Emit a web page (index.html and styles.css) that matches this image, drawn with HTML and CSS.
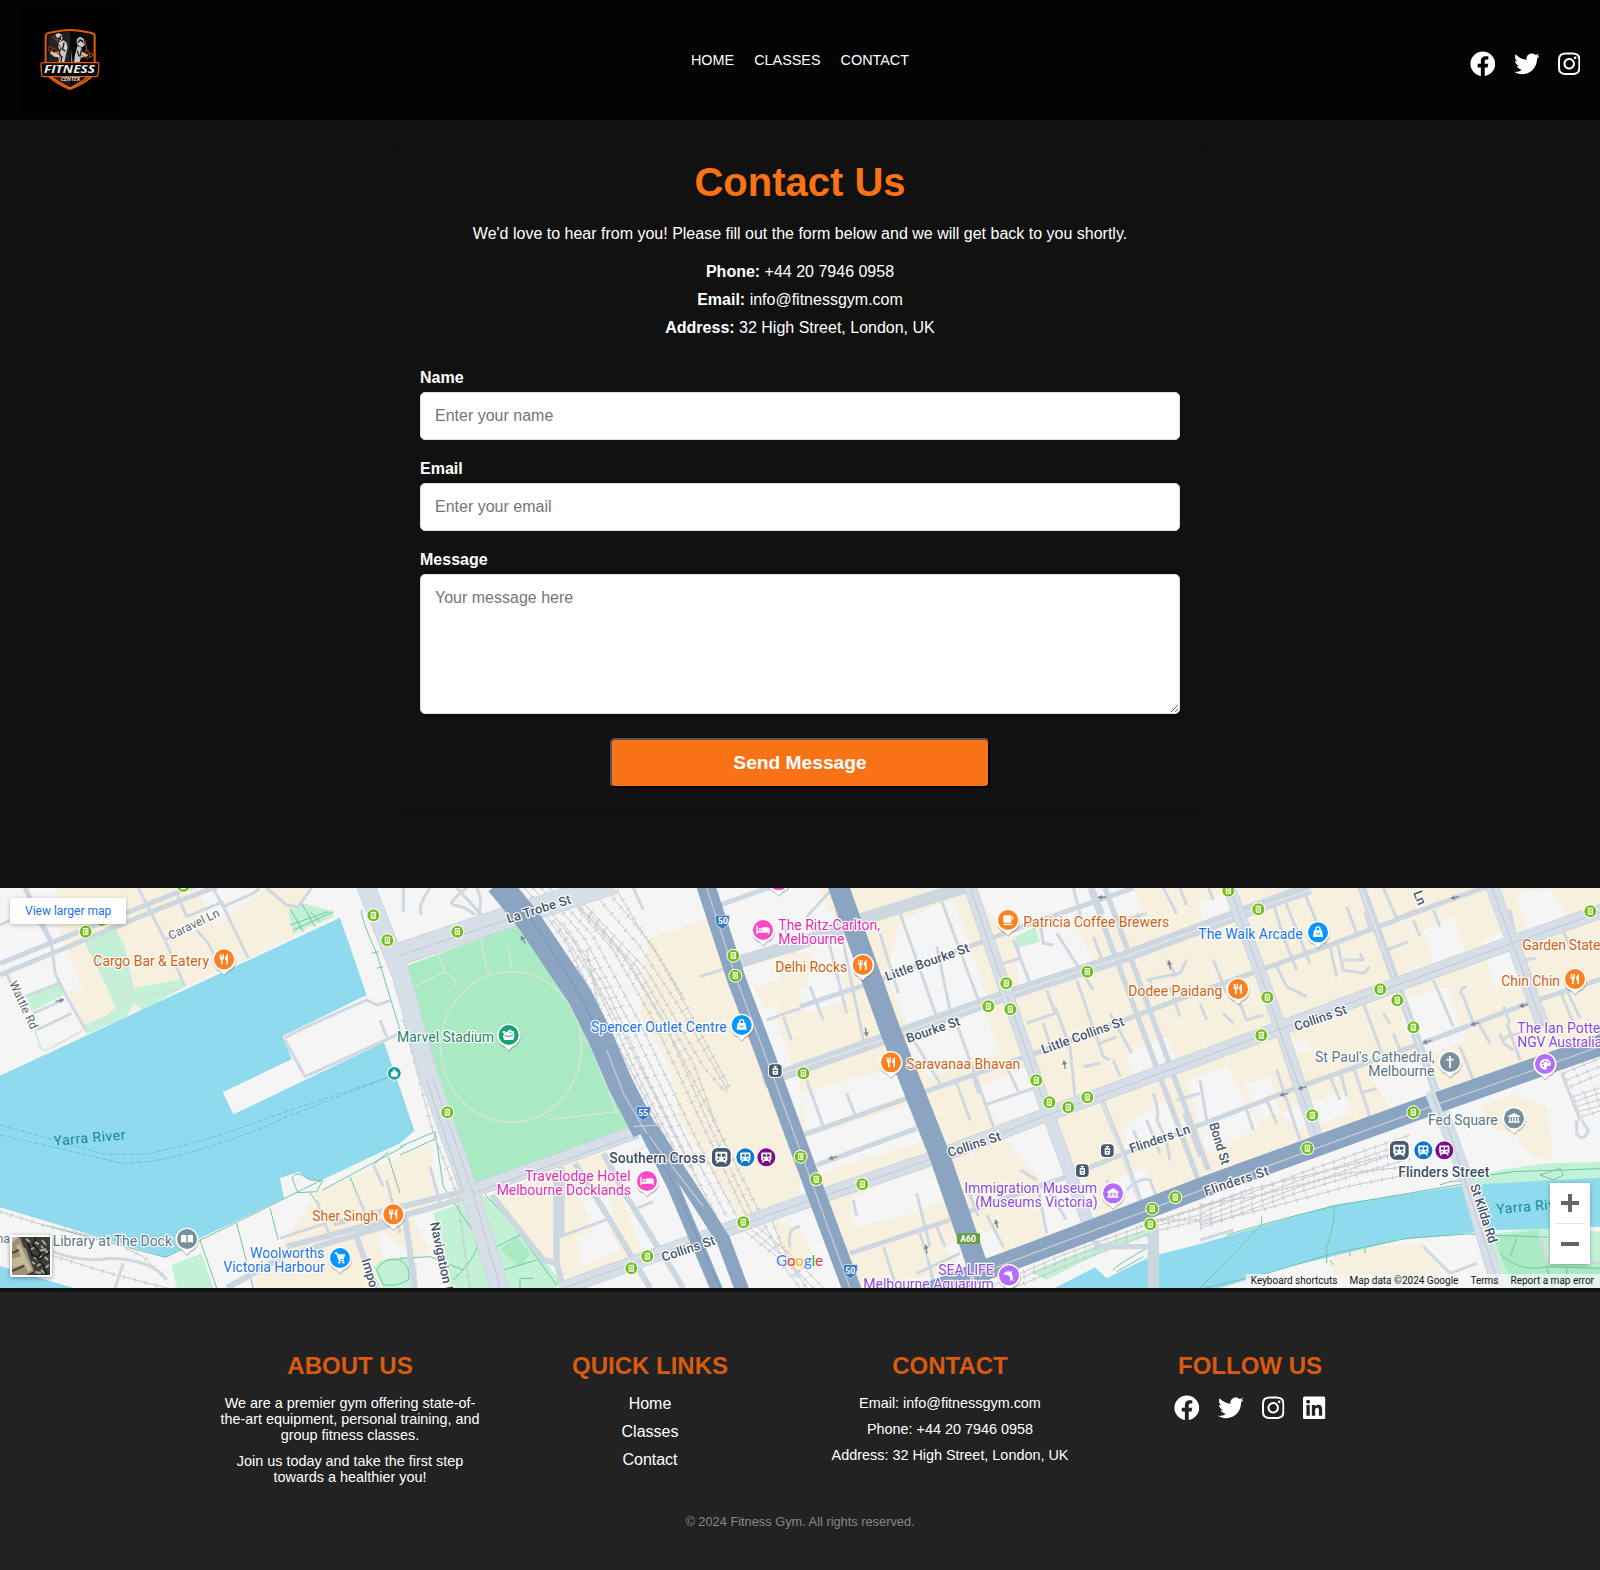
FILE: index.html
```html
<!DOCTYPE html>
<html lang="en">
<head>
<meta charset="utf-8">
<title>Contact Us - Fitness Gym</title>
<link rel="stylesheet" href="styles.css">
</head>
<body>
<svg class="sprite" aria-hidden="true">
  <symbol id="facebook" viewBox="0 0 512 512"><path d="M504 256C504 119 393 8 256 8S8 119 8 256c0 123.78 90.69 226.38 209.25 245V327.69h-63V256h63v-54.64c0-62.15 37-96.48 93.67-96.48 27.14 0 55.52 4.84 55.52 4.84v61h-31.28c-30.8 0-40.41 19.12-40.41 38.73V256h68.78l-11 71.69h-57.78V501C413.31 482.38 504 379.78 504 256z"/></symbol>
  <symbol id="twitter" viewBox="0 0 512 512"><path d="M459.37 151.716c.325 4.548.325 9.097.325 13.645 0 138.72-105.583 298.558-298.558 298.558-59.452 0-114.68-17.219-161.137-47.106 8.447.974 16.568 1.299 25.34 1.299 49.055 0 94.213-16.568 130.274-44.832-46.132-.975-84.792-31.188-98.112-72.772 6.498.974 12.995 1.624 19.818 1.624 9.421 0 18.843-1.3 27.614-3.573-48.081-9.747-84.143-51.98-84.143-102.985v-1.299c13.969 7.797 30.214 12.67 47.431 13.319-28.264-18.843-46.781-51.005-46.781-87.391 0-19.492 5.197-37.36 14.294-52.954 51.655 63.675 129.3 105.258 216.365 109.807-1.624-7.797-2.599-15.918-2.599-24.04 0-57.828 46.782-104.934 104.934-104.934 30.213 0 57.502 12.67 76.67 33.137 23.715-4.548 46.456-13.32 66.599-25.34-7.798 24.366-24.366 44.833-46.132 57.827 21.117-2.273 41.584-8.122 60.426-16.243-14.292 20.791-32.161 39.308-52.628 54.253z"/></symbol>
  <symbol id="instagram" viewBox="0 0 448 512"><path d="M224.1 141c-63.6 0-114.9 51.3-114.9 114.9s51.3 114.9 114.9 114.9S339 319.5 339 255.9 287.7 141 224.1 141zm0 189.6c-41.1 0-74.7-33.5-74.7-74.7s33.5-74.7 74.7-74.7 74.7 33.5 74.7 74.7-33.6 74.7-74.7 74.7zm146.4-194.3c0 14.9-12 26.8-26.8 26.8-14.9 0-26.8-12-26.8-26.8s12-26.8 26.8-26.8 26.8 12 26.8 26.8zm76.1 27.2c-1.7-35.9-9.9-67.7-36.2-93.9-26.2-26.2-58-34.4-93.9-36.2-37-2.1-147.9-2.1-184.9 0-35.8 1.7-67.6 9.9-93.9 36.1s-34.4 58-36.2 93.9c-2.1 37-2.1 147.9 0 184.9 1.7 35.9 9.9 67.7 36.2 93.9s58 34.4 93.9 36.2c37 2.1 147.9 2.1 184.9 0 35.9-1.7 67.7-9.9 93.9-36.2 26.2-26.2 34.4-58 36.2-93.9 2.1-37 2.1-147.8 0-184.8zM398.8 388c-7.8 19.6-22.9 34.7-42.6 42.6-29.5 11.7-99.5 9-132.1 9s-102.7 2.6-132.1-9c-19.6-7.8-34.7-22.9-42.6-42.6-11.7-29.5-9-99.5-9-132.1s-2.6-102.7 9-132.1c7.8-19.6 22.9-34.7 42.6-42.6 29.5-11.7 99.5-9 132.1-9s102.7-2.6 132.1 9c19.6 7.8 34.7 22.9 42.6 42.6 11.7 29.5 9 99.5 9 132.1s2.7 102.7-9 132.1z"/></symbol>
  <symbol id="linkedin" viewBox="0 0 448 512"><path d="M416 32H31.9C14.3 32 0 46.5 0 64.3v383.4C0 465.5 14.3 480 31.9 480H416c17.6 0 32-14.5 32-32.3V64.3c0-17.8-14.4-32.3-32-32.3zM135.4 416H69V202.2h66.5V416zm-33.2-243c-21.3 0-38.5-17.3-38.5-38.5S80.9 96 102.2 96c21.2 0 38.5 17.3 38.5 38.5 0 21.3-17.2 38.5-38.5 38.5zm282.1 243h-66.4V312c0-24.8-.5-56.7-34.5-56.7-34.6 0-39.9 27-39.9 54.9V416h-66.4V202.2h63.7v29.2h.9c8.9-16.8 30.6-34.5 62.2-34.5 66.5 0 78.9 43.8 78.9 100.9z"/></symbol>
</svg>

<header class="site-header">
  <a class="logo" href="#">
    <svg viewBox="60 30 300 300" width="100" height="100" role="img" aria-label="Fitness Center">
      <rect x="60" y="30" width="300" height="300" fill="#000"/>
      <path d="M137 196V108q0-8 9-9 40-9 64-9t65 9q9 1 9 9v88l-10 34q-22 20-64 37-40-16-62-37z" fill="#080808" stroke="#df5c0c" stroke-width="6"/>
      <path d="M145 106q40-9 65-9v160q-30-12-50-29l-15-30z" fill="#222"/>
      <path d="M150 228q26 18 60 36 34-18 58-36" fill="none" stroke="#f26a12" stroke-width="4"/>
      <g fill="#c8c8c8">
        <path d="M167 103l9-4 10 5 1 12-5 8-9-2-5-8z"/>
        <path d="M177 126l14-5 9 8 3 13-4 17-6 27h-16l-2-14-12-2-13-10 3-6 16 3 10-4-4-13z"/>
        <path d="M231 117l9-7 11 6 3 18-7 8-11-4-6-9z"/>
        <path d="M232 139l11 3 4 15 17 5-1 7-21 4-2 12-18 2 3-22z"/>
        <path d="M214 147l3 40h-3z"/>
      </g>
      <path d="M168 112l8 6 8-12M171 124l12-8M184 143l-7 15 8 15M192 128l-4 20 8 6M186 168l-3 18M233 128l8-8 10 8M238 119l11 4M232 152l5 17M244 150l-4 20" stroke="#222" stroke-width="4" fill="none"/>
      <path d="M157 108l17 19M176 133l12 18M163 152l18 16-6 18M255 122l6 33M243 163l17 13 16-8" fill="none" stroke="#bb4b0b" stroke-width="3"/>
      <g fill="#111" stroke="#a8450d" stroke-width="3"><circle cx="151" cy="146" r="6"/><circle cx="163" cy="151" r="6"/><circle cx="261" cy="157" r="6"/><circle cx="273" cy="165" r="5"/></g>
      <path d="M128 188h165q4 0 4 5l-3 31q-1 6-6 6H130q-5 0-5-5l-2-31q0-6 5-6z" fill="#050505" stroke="#df5c0c" stroke-width="4"/>
      <text class="logo-name" x="132" y="219" textLength="153" lengthAdjust="spacingAndGlyphs">FITNESS</text>
      <text class="logo-sub" x="182" y="242" textLength="58" lengthAdjust="spacingAndGlyphs">CENTER</text>
    </svg>
  </a>
  <nav class="main-nav"><a href="#">HOME</a><a href="#">CLASSES</a><a href="#">CONTACT</a></nav>
  <div class="social social-header">
    <a href="#"><svg class="icon"><use href="#facebook"/></svg></a>
    <a href="#"><svg class="icon"><use href="#twitter"/></svg></a>
    <a href="#"><svg class="icon icon-narrow"><use href="#instagram"/></svg></a>
  </div>
</header>

<main class="contact">
  <h1>Contact Us</h1>
  <p class="intro">We'd love to hear from you! Please fill out the form below and we will get back to you shortly.</p>
  <div class="details">
    <p><strong>Phone:</strong> +44 20 7946 0958</p>
    <p><strong>Email:</strong> info@fitnessgym.com</p>
    <p><strong>Address:</strong> 32 High Street, London, UK</p>
  </div>
  <form class="form">
    <div class="field"><label for="name">Name</label><input id="name" type="text" placeholder="Enter your name"></div>
    <div class="field"><label for="email">Email</label><input id="email" type="email" placeholder="Enter your email"></div>
    <div class="field"><label for="message">Message</label><textarea id="message" placeholder="Your message here"></textarea></div>
    <button type="submit">Send Message</button>
  </form>
</main>

<section class="map">
<svg class="map-canvas" viewBox="0 24 4800 1200" preserveAspectRatio="none">
  <defs>
    <g id="pin"><path d="M0 47L-11 36A35 35 0 1 1 11 36Z" fill="#777" opacity=".45" transform="translate(1 3)"/><path d="M0 46L-12 34A35 35 0 1 1 12 34Z" fill="#fff"/><circle r="30" fill="currentColor"/></g>
    <g id="food"><use href="#pin"/><path d="M-13-15v11q0 5 4 5v14h5V1q4 0 4-5v-11h-3v9h-2v-9h-3v9h-2v-9zM12-16q-9 4-9 18h4v13h5z" fill="#fff"/></g>
    <g id="bag"><use href="#pin"/><path d="M-12-6h24l3 20h-30z" fill="#fff"/><path d="M-6-5v-5a6 6 0 0 1 12 0v5" fill="none" stroke="#fff" stroke-width="4"/><path d="M-6 2q6 8 12 0" fill="none" stroke="currentColor" stroke-width="3"/></g>
    <g id="bed"><use href="#pin"/><path d="M-18-13v25M18 12V-3H-2V4h-16M18 6h-36" fill="none" stroke="#fff" stroke-width="4"/><path d="M-2-8h16q4 0 4 5v8H-2z" fill="#fff"/><circle cx="-9" cy="-3" r="4" fill="#fff"/></g>
    <g id="tram"><circle r="21" fill="#fff"/><circle r="18" fill="#75bf1c"/><rect x="-8" y="-11" width="16" height="21" rx="3" fill="#fff"/><rect x="-5" y="-7" width="10" height="13" fill="#75bf1c"/><path d="M-3-5h7v9h-7z" fill="#dff2c6"/></g>
    <g id="lightrail"><rect x="-22" y="-22" width="44" height="44" rx="13" fill="#fff"/><rect x="-19" y="-19" width="38" height="38" rx="11" fill="#455a6e"/><path d="M-5-14h10v3h-3v3h4q2 0 2 3V9q0 3-3 3H-5q-3 0-3-3V-5q0-3 2-3h4v-3h-3z" fill="#fff"/><path d="M-5-3H5v4H-5zM-3 5h6v3h-6z" fill="#455a6e"/></g>
    <g id="train"><path d="M-14-17h28q4 0 4 4V7q0 5-6 5l5 6h-6l-4-5H-7l-4 5h-6l5-6q-6 0-6-5v-20q0-4 4-4z" fill="#fff"/><path d="M-12-11H-2V-2h-10zM2-11H12V-2H2z" fill="currentColor"/><circle cx="-9" cy="5" r="3" fill="currentColor"/><circle cx="9" cy="5" r="3" fill="currentColor"/></g>
    <g id="stations"><rect x="-32" y="-32" width="64" height="64" rx="19" fill="#fff"/><rect x="-28" y="-28" width="56" height="56" rx="16" fill="#455a6e"/><g color="#455a6e"><use href="#train"/></g><g transform="translate(72 0)" color="#0b78d0"><circle r="30" fill="#fff"/><circle r="27" fill="#0b78d0"/><use href="#train" transform="scale(.85)"/></g><g transform="translate(135 0)" color="#7b0e86"><circle r="30" fill="#fff"/><circle r="27" fill="#7b0e86"/><use href="#train" transform="scale(.85)"/></g></g>
    <g id="shield"><path d="M-21-18H21Q24 14 0 23Q-24 14-21-18Z" fill="#3a78c9" stroke="#dce7f5" stroke-width="2"/></g>
    <g id="arrow"><path d="M-14 0H12" stroke="#7d8791" stroke-width="4"/><path d="M-14 0l12-8v16z" fill="#7d8791"/></g>
    <g id="rails">
      <path d="M1575 24L1700 190 1840 470 1990 760 2120 1010"/><path d="M1600 24L1725 190 1865 450 2020 760 2150 1010"/><path d="M1625 24L1750 170 1890 430 2060 780 2180 1010"/><path d="M1650 24L1780 170 1920 430 2090 780 2210 1010"/><path d="M1680 24L1840 210 1960 420 2110 740 2240 1010"/><path d="M1700 40L1870 230 1990 420 2130 740 2260 1010"/><path d="M1720 60L1910 260 2080 550 2150 740 2280 1000"/><path d="M1750 70L1940 270 2110 560 2180 640"/><path d="M1790 50L1920 200 2050 400 2185 635"/><path d="M1820 30L1960 200 2070 400 2190 625"/><path d="M1850 30L1910 130 2000 270 2055 360"/><path d="M1760 210L1800 400 1890 600 2000 850"/><path d="M1730 260L1830 450 1930 680"/><path d="M1660 120L1780 300 1900 560 2050 860"/><path d="M1690 130L1810 310 1940 590 2080 870"/><path d="M1770 100L1890 250 2040 520 2180 800"/>
      <path d="M2230 1050L2330 1130 2400 1224"/><path d="M2245 1040L2350 1130 2440 1224"/><path d="M2260 1030L2380 1130 2470 1224"/><path d="M2280 1010L2340 1120 2400 1190"/><path d="M2310 1010L2370 1150 2420 1224"/>
      <path d="M3600 1000L3900 880 4230 765"/><path d="M3600 1015L3900 900 4230 785"/><path d="M3600 1030L3900 920 4230 805"/><path d="M3600 1045L3900 935 4230 835"/><path d="M3600 985L3760 925 4030 860 4220 810"/><path d="M3600 975L3760 950 4040 880 4220 860"/><path d="M3600 1035L3800 985 4040 920 4220 885"/><path d="M3420 1040L3620 975 3760 925"/><path d="M2980 1215L3200 1120 3480 1020 3600 985"/><path d="M3010 1215L3220 1130 3480 1035 3620 1000"/><path d="M3040 1224L3240 1140 3480 1050 3650 1010"/><path d="M2960 1200L3160 1120 3420 1020 3600 1020"/>
      <path d="M4690 580L4810 530M4700 600L4810 555M4710 620L4810 578M4720 650L4810 620M4725 665L4810 635M4730 680L4810 655M4735 695L4810 675M4745 710L4810 690"/>
      <path d="M0 995L130 1035 330 1080 430 1130 500 1200"/><path d="M150 1125L330 1180 500 1224"/><path d="M1210 420L1300 760 1370 940 1410 1224"/>
    </g>
    <g id="main-roads">
      <path d="M1160 238L1200 222 1530 110 1840 10" stroke-width="68"/>
      <path d="M1090 0L1205 290 1290 600 1410 940 1505 1240" stroke-width="56"/>
      <path d="M1680 1228L2400 970 2840 820 3150 700 3840 445 4200 310 4530 190 4810 92" stroke-width="44"/>
      <path d="M2908 15L3020 340 3140 690 3270 1045" stroke-width="38"/>
      <path d="M3685 15L3840 440 3955 785" stroke-width="38"/>
      <path d="M4475 15L4630 440" stroke-width="40"/>
      <path d="M4300 630L4400 900 4500 1240" stroke-width="42"/>
      <path d="M1410 935L1910 755" stroke-width="42"/>
    </g>
  </defs>
  <rect y="24" width="4800" height="1200" fill="#f5f5f5"/>

  <!-- built-up blocks -->
  <g fill="#f8f0de">
    <path d="M170 24H590L640 140 800 24H935L905 75 1005 90 1000 115 555 322 400 395 260 460 200 330 250 335 170 130Z"/>
    <path d="M950 935L1200 830 1290 790 1300 830 1290 900 1320 960 1230 1000 1290 1120 1240 1130 1130 1040 1170 1224 770 1224 750 1160 860 1080Z"/>
    <path d="M1480 940L1800 820 1830 850 1920 1100 1960 1130 1720 1210 1640 1140Z"/>
    <path d="M1945 175L2120 115 2290 560 2400 860 2400 960 2230 1040 2120 850 2040 720 2010 560 1920 400Z"/>
    <path d="M2260 320L2340 300 2355 350 2300 390ZM2340 230L2400 210 2480 520 2380 560 2330 420Z"/>
    <path d="M2400 24H4800V500L4400 640 4250 690 3300 1035 2960 1140 2820 830 2640 420Z"/>
    <path d="M2400 220L2590 200 2680 440 2790 790 2910 1170 2560 1224 2440 960 2400 860Z"/>
    <path d="M4440 680L4540 640 4640 680 4660 840 4600 835 4540 760 4480 750Z"/><path d="M4000 1110L4270 1090 4300 1140 4350 1224H4000Z"/>
    <path d="M2310 1010L2370 1180 2460 1160 2400 1050Z"/>
  </g>
  <g fill="#f5f5f5">
    <path d="M1740 950L1820 920 1850 1040 1780 1060ZM1730 1070L1820 1040 1860 1110 1740 1160Z"/>
    <path d="M2400 24H2460L2520 190 2400 210Z"/>
    <path d="M2700 120L2860 60 2960 350 2720 440 2660 280Z"/><path d="M2910 24H3400L3430 90 3100 190 3020 160Z"/><path d="M3040 200L3230 150 3280 240 3060 320Z"/>
    <path d="M2460 110L2500 90 2580 270 2420 330ZM2400 320L2530 300 2540 360 2410 400Z"/><path d="M2400 640L2700 560 2740 650 2420 750ZM2420 770L2740 670 2780 780 2450 880Z"/>
    <path d="M2700 500L2850 440 2950 380 3000 520 2790 590Z"/><path d="M2940 620L3080 560 3130 690 2990 730Z"/><path d="M2730 870L2790 855 2830 960 2740 1000 2560 1040 2550 960Z"/>
    <path d="M3010 770L3150 720 3250 930 3120 900Z"/><path d="M3110 940L3260 900 3290 1030 3130 1060ZM3340 900L3430 860 3500 970 3380 1000Z"/><path d="M3260 30L3380 24 3400 100 3280 130Z"/>
    <path d="M2830 1100L2980 1050 3010 1120 2870 1150Z"/><path d="M3380 520L3500 470 3540 560 3400 590ZM3370 740L3500 660 3540 780 3380 810ZM3560 600L3680 560 3780 740 3620 820Z"/>
    <path d="M4270 150L4360 110 4400 230 4310 280Z"/><path d="M4200 360L4340 320 4400 480 4270 530 4210 450Z"/><path d="M4450 180L4540 140 4560 330 4480 320Z"/><path d="M4550 40L4650 24 4700 110 4580 150Z"/>
    <path d="M4100 570L4270 510 4330 640 4180 700ZM3840 700L4040 630 4050 700 3900 750ZM3740 610L3810 590 3840 700 3770 720Z"/><path d="M3600 70L3680 40 3690 110 3610 140ZM3880 490L3920 480 3930 510 3890 520Z"/><path d="M2640 940L2730 920 2740 1000 2650 1020Z"/>
  </g>

  <!-- parks -->
  <g fill="#c3f1d6">
    <path d="M250 180L340 135 375 200 400 325 540 298 555 320 430 390 400 370 380 410 260 462 250 435 350 395 320 320Z"/>
    <path d="M865 95L910 70 1000 95 1000 110 880 160Z"/><path d="M80 350L180 310 190 345 95 395Z"/>
    <path d="M515 1155L605 1120 640 1224H530Z"/><path d="M1300 1000L1410 960 1480 1224H1350Z"/><path d="M1440 945L1480 960 1680 1200 1670 1224H1530Z"/><path d="M1120 1160L1200 1130 1250 1150 1250 1224H1150Z"/>
    <path d="M3045 170L3105 140 3120 185 3055 205Z"/><path d="M3090 1175L3280 1100 3430 1050 3450 1065 3300 1120 3140 1200 3120 1190Z"/>
    <path d="M4420 895L4500 870 4640 850 4800 846V895L4430 915Z"/><path d="M4470 1065L4620 1040 4800 1055V1224H4520Z"/><path d="M1130 1150Q1200 1110 1240 1170L1240 1224H1150Z"/>
  </g>
  <g fill="#aaeac3"><path d="M1208 262L1560 132Q1640 240 1740 370L1800 500 1900 735 1425 915Z"/><path d="M4480 1070L4615 1050 4640 1140 4800 1160V1224H4540Z"/><path d="M1500 1110L1550 1070 1590 1120 1560 1160Z"/></g>

  <!-- water -->
  <g fill="#90daed">
    <path d="M0 587L1020 113 1100 345 848 468 875 538 668 637 700 703 1152 487 1200 625 1243 752 1200 790 965 900 930 900 895 875 840 895 852 955 600 1075 497 1132 0 982Z"/><path d="M0 1158L220 1224H0Z"/>
    <path d="M3165 1224L3285 1162 3320 1195 3450 1130 3600 1092 4000 975 4400 915 4800 893V1040L4500 1050 4200 1080 3850 1165 3660 1224Z"/>
  </g>
  <g fill="none" stroke="#60c4de" stroke-width="3" stroke-dasharray="15 6"><path d="M0 735Q180 785 310 822H440Q620 785 800 715L1165 592"/><path d="M0 765Q200 810 365 850 480 845 530 828 700 785 860 710L1165 592"/></g>

  <!-- park paths and shoreline walks -->
  <g fill="none" stroke="#6fc5a5" stroke-width="3">
    <path d="M130 1035L497 1132 965 900M600 1080L650 1224M710 1030L760 1224M810 985L835 1080M877 895Q880 880 900 882L930 900 968 902 950 935 893 938ZM1050 890L1070 940M1165 830L1200 940M968 930L1210 800M930 938L955 975M1120 855L1165 815"/>
    <path d="M870 85L910 155M905 70L945 140M930 95L960 125M880 150L1000 95M870 135L985 95M1085 90Q1080 110 1130 220L1200 450M1115 220L1135 215M1130 265L1150 260"/>
    <path d="M1200 800L1305 755 1330 920 1430 1070Q1450 1110 1360 1200M1455 945L1570 1060 1490 1100M1550 1050L1670 1215M1510 1170L1610 1140M1200 1135L1290 1130 1390 1170M1200 825L1310 775M1560 1224V1195H1600"/>
    <path d="M1130 1170Q1150 1130 1200 1140 1235 1160 1225 1200L1190 1215H1150Z"/>
    <path d="M3340 1170Q3350 1155 3440 1105M3350 1175L3430 1130"/>
    <path d="M3680 1065Q3900 1000 4020 975L4400 910M4000 978Q4010 1020 3980 1100V1150M3600 1224L3785 1035V1010M3600 1228L3800 1180 4000 1120 4220 1075 4400 1062 4640 1072M3990 1140L4000 1155M4050 1115V1130M4095 1105V1120M4320 915L4350 905 4400 900M4440 890L4540 875 4800 866M4620 885L4680 865 4690 885 4660 900ZM4500 1120Q4560 1180 4640 1160L4800 1165M4530 1130L4550 1075M4640 1160L4660 1224M4700 1165V1224"/>
  </g>
  <g fill="none" stroke="#d9e4de" stroke-width="4"><ellipse cx="1533" cy="501" rx="211" ry="226"/><path d="M1445 170Q1445 240 1470 285M1523 195L1538 275M1313 220L1335 275 1245 320M1335 275L1370 305 1362 320M1735 470Q1770 480 1780 520L1850 695 1650 718 1635 710M1850 697Q1930 690 1970 740 1990 770 1900 820"/></g>
  <g fill="none" stroke="#d6e2dd" stroke-width="5"><path d="M260 180L345 340 410 355 545 325M340 140L400 325 345 390 260 455M320 285L400 335M250 450L160 500Q130 520 120 500L105 450"/></g>

  <!-- railways -->
  <g fill="none" stroke="#c6cad0"><use href="#rails" stroke-width="3"/><use href="#rails" stroke-width="14" stroke-dasharray="3 30"/></g>

  <!-- lanes -->
  <g fill="none" stroke="#cfd8e1" stroke-width="9" stroke-linejoin="round">
    <path d="M0 135L80 100M415 24L495 180 555 320M530 40L560 110 670 65M495 180L560 140M640 24L670 80 745 235M670 80L760 40 780 24M590 150L625 190 650 240M100 100L155 190 165 280 200 350 260 455M20 280L50 350M75 350L175 310M100 400L190 360M110 450L215 400M800 24L860 75 895 80 935 24M855 480L915 590 1200 460M855 475Q860 465 1100 360L1130 375 1170 362M1140 420L1160 470"/>
    <path d="M160 1115Q250 1150 330 1135 460 1140 500 1200M370 1150L345 1224M840 1075L975 1030 1000 1095M975 1030L950 960M1070 940L1100 1010M1150 920L1120 855M1160 900L1200 1060"/>
    <path d="M1210 24V95M1290 24Q1250 80 1265 105M1400 24Q1340 70 1360 75 1400 80 1425 105M1370 24L1445 105M1430 24Q1450 60 1435 105"/>
    <path d="M1290 860L1325 985M1665 870V1120L1695 1224M1680 1070L1830 1015M2100 290L2210 255M2300 420L2400 385M2350 410L2375 480M1910 985L1960 965M1900 24L1930 90M2040 60M2370 1100Q2360 1040 2400 1040M2380 1190L2400 1170"/>
    <path d="M2420 110L2500 24M2350 130L2380 220M2470 120L2540 400M2510 90L2590 480M2550 200L2660 380M2640 160L2695 340M2700 100L2810 410M2810 200L2850 390M2820 50L2935 360M2430 320L2470 420M2420 600L2470 740M2540 640L2565 705M2740 480L2820 610M2870 430L2980 740M2870 610L2910 720M2920 590L2935 640M2955 675L3100 625M3020 560L3055 635M2750 940L2790 1100M2810 1040L2835 1100M2840 830L2855 870M2900 920L2935 1010M2960 1005L3010 1100M3115 930L3140 1060M2650 1100L2690 1224M2560 960L2570 1010M2760 1060L2790 1160 2800 1210M2750 1180L2880 1120M3060 870L3110 900M3150 940L3200 1020"/>
    <path d="M3010 250L3060 235 3050 190M3040 180L3090 310M3120 130L3130 190 3160 195M3170 160L3280 330M3230 300L3310 530 3330 540M3280 170L3310 250M3140 330L3165 400 3080 430M3165 380L3210 500 3225 650M3130 430L3155 510M3330 400L3395 520M3300 490L3350 470M3340 540L3360 590M3450 300L3470 350M3510 320L3540 410M3560 240L3540 280 3440 300M3500 240L3530 290M3300 550L3250 560M3440 720L3480 820M3400 750L3420 800M3460 640Q3480 700 3470 720 3500 770 3510 840M3380 930Q3420 890 3450 900L3470 950M3320 900L3340 940M3550 700L3600 830M3530 660L3600 640M3220 24L3250 140M3280 24L3310 100M3390 24L3330 50M3410 100L3440 140M3490 24L3530 100M3540 24L3560 75M3330 130L3440 100"/>
    <path d="M3625 24L3640 60M3820 70L3850 170 3890 270M3850 50L3930 250M3910 30L3980 200M4010 180L4030 270 4090 280 4110 260M3990 200L4010 290M4080 220L4090 240 4020 240M4040 80L4070 160M4095 95L4110 150M3640 240L3680 340M3670 400L3700 430M3830 260L3860 320 3920 350M3720 370L3740 420 3790 405M3600 370L3620 420M4090 370L4150 530M4150 400L4170 430M4180 460L4200 510M4160 210L4225 185M4150 24L4190 115 4250 90M4240 120L4260 170M4300 90L4320 140M4300 300L4360 440M4400 320Q4370 330 4390 350L4420 430M4430 420L4470 490M4510 380L4530 430M4380 500L4420 600M4500 460Q4510 500 4530 500M4560 460Q4500 470 4510 490L4540 510M4560 540L4520 430M3830 570L3900 780M3800 660L3830 730M3740 690L3760 750M3990 590L4020 660M4020 570L4040 650M4060 560L4110 710M4080 640L4130 625M3600 600L3620 720M4530 90L4560 240M4570 240L4610 235M4680 130L4710 200M4680 330L4720 430M4700 330L4740 415M4685 580L4740 720M4730 720V760Q4750 790 4765 750L4745 720"/>
    <path d="M4620 1070L4640 1140 4800 1150M4270 1100L4350 1180 4430 1150M3600 1080L3700 1050"/>
  </g>

  <!-- secondary streets -->
  <g fill="none" stroke="#cdd7e0">
    <path d="M0 250L150 190 600 10M0 285L180 210 480 85 700 0M75 24L155 190" stroke-width="15"/>
    <path d="M1000 1030L1410 930M860 1100L1200 1010 1410 950M680 1224L850 1130 1200 1025M1065 1060L1110 1180 1140 1240M1215 1010L1245 1224" stroke-width="18"/>
    <path d="M1475 945L1630 1140 1670 1150 1690 1224M1670 870V1150M1685 860V1070M1725 850L1830 1020 1950 1224M1810 820L1880 950 2050 1224" stroke-width="18"/>
    <path d="M2400 380L2640 300 3040 150 3400 24M2400 768L2720 655M2450 855L2750 745M2760 640L3120 515 3400 410 3600 335 3990 195 4280 85 4460 20" stroke-width="15"/>
    <path d="M2550 1120L2850 1020M2890 1000L3200 890 3400 810 3600 735 3900 620 4280 485 4570 375 4810 295" stroke-width="15"/>
    <path d="M2160 75L2330 15M3305 660L3370 820 3455 1060" stroke-width="15"/>
    <path d="M2220 245L2400 190 2580 120 2900 20" stroke-width="38"/>
    <path d="M2290 605L2400 565 2700 460 3020 345 3360 235 3600 145 3750 90 3930 24" stroke-width="36"/>
    <path d="M3270 24L3595 900M3315 24L3625 870M3250 1050L3300 1100 3460 1100V1224" stroke-width="16"/>
    <path d="M4082 15L4190 310 4310 640" stroke-width="25"/>
    <path d="M3460 1040V1224" stroke-width="34"/>
  </g>
  <path d="M2290 600L2700 462 3020 346 3360 235 3750 92 3930 30M4082 24L4310 640M3305 660L3455 1060" fill="none" stroke="#dfe5ea" stroke-width="5"/>
  <use href="#main-roads" fill="none" stroke="#c4ced8"/>
  <g fill="none" stroke="#d6dfe7"><path d="M1160 238L1200 222 1530 110 1840 10" stroke-width="64"/><path d="M1090 0L1205 290 1290 600 1410 940 1505 1240" stroke-width="52"/><path d="M1680 1228L2400 970 2840 820 3150 700 3840 445 4200 310 4530 190 4810 92" stroke-width="40"/><path d="M2908 15L3020 340 3140 690 3270 1045M3685 15L3840 440 3955 785" stroke-width="34"/><path d="M4475 15L4630 440" stroke-width="36"/><path d="M4300 630L4400 900 4500 1240M1410 935L1910 755" stroke-width="38"/></g>
  <g fill="none" stroke="#c0c8d0" stroke-width="3"><path d="M1200 226L1530 116M1300 600L1420 940 1500 1224M1420 940L1890 770M1690 1224L2400 972 2840 822 3150 702 3840 447 4200 312 4530 192 4800 97M2910 24L3140 690M3690 24L3955 785M4310 640L4500 1224M4475 24L4630 440M1280 600L1390 935"/></g>

  <!-- highways -->
  <g fill="none" stroke="#8aa4c1" stroke-linejoin="round">
    <path d="M1495 10L1585 120 1740 350 1800 470 1860 610 1935 755" stroke-width="76"/><path d="M1925 730L2020 920 2155 1240" stroke-width="36"/><path d="M1950 740L2100 970 2170 1080 2230 1240" stroke-width="42"/>
    <path d="M2115 10L2210 300 2290 510 2400 810 2560 1240" stroke-width="56"/><path d="M2512 10L2670 450 2820 830 2945 1195" stroke-width="62"/>
    <path d="M2780 1240L2950 1172 3270 1052 3600 925 4300 672 4810 492" stroke-width="62"/>
  </g>
  <g fill="none" stroke="#c5cbd4" stroke-width="4"><path d="M1820 510L1870 640 1940 760 2110 980M2120 24L2210 300 2290 510 2400 810 2550 1224M2980 1165L3600 932 4300 677 4800 500M1900 740L1980 735"/></g>
  <g fill="none" stroke="#7892b5" stroke-width="3"><path d="M1570 80L1740 345 1800 470M1940 760L2030 930 2160 1224"/></g>
  <path d="M4290 640L4330 740" stroke="#d6dfe7" stroke-width="30"/>
  <path d="M4295 640L4335 745" stroke="#c0c8d0" stroke-width="3"/>
  <use href="#arrow" transform="translate(178 362) rotate(165)"/><use href="#arrow" transform="translate(1570 180) rotate(60)"/><use href="#arrow" transform="translate(3308 52)"/><use href="#arrow" transform="translate(3509 256) rotate(80)"/><use href="#arrow" transform="translate(3194 555) rotate(80)"/><use href="#arrow" transform="translate(2598 455) rotate(-100)"/><use href="#arrow" transform="translate(2500 833) rotate(-15)"/><use href="#arrow" transform="translate(2990 1033) rotate(75)"/><use href="#arrow" transform="translate(2779 1108) rotate(80)"/><use href="#arrow" transform="translate(4366 52) rotate(-15)"/><use href="#arrow" transform="translate(4572 376) rotate(-15)"/><use href="#arrow" transform="translate(4426 431) rotate(-15)"/><use href="#arrow" transform="translate(4282 485) rotate(-15)"/><use href="#arrow" transform="translate(3908 623) rotate(-15)"/><use href="#arrow" transform="translate(3853 643) rotate(-15)"/>

  <!-- tram stops -->
  <use href="#tram" x="257" y="155"/><use href="#tram" x="305" y="120"/><use href="#tram" x="550" y="18"/><use href="#tram" x="1120" y="106"/><use href="#tram" x="1162" y="181"/><use href="#tram" x="1372" y="155"/><use href="#tram" x="1342" y="697"/><use href="#tram" x="2200" y="227"/><use href="#tram" x="2206" y="287"/><use href="#tram" x="2230" y="1027"/><use href="#tram" x="1942" y="1129"/><use href="#tram" x="1894" y="1165"/><use href="#tram" x="2410" y="580"/><use href="#tram" x="2402" y="830"/><use href="#tram" x="2449" y="898"/><use href="#tram" x="2587" y="913"/><use href="#tram" x="2965" y="379"/><use href="#tram" x="3019" y="310"/><use href="#tram" x="3031" y="388"/><use href="#tram" x="3262" y="275"/><use href="#tram" x="3109" y="601"/><use href="#tram" x="3148" y="667"/><use href="#tram" x="3205" y="682"/><use href="#tram" x="3262" y="652"/><use href="#tram" x="3526" y="952"/><use href="#tram" x="3457" y="986"/><use href="#tram" x="3451" y="1033"/><use href="#tram" x="3685" y="32"/><use href="#tram" x="3775" y="88"/><use href="#tram" x="3802" y="352"/><use href="#tram" x="3784" y="466"/><use href="#tram" x="3937" y="706"/><use href="#tram" x="3922" y="805"/><use href="#tram" x="4240" y="697"/><use href="#tram" x="4141" y="328"/><use href="#tram" x="4192" y="361"/><use href="#tram" x="4240" y="442"/><use href="#tram" x="4771" y="94"/>
  <use href="#lightrail" x="2326" y="572"/><use href="#lightrail" x="3247" y="872"/><use href="#lightrail" x="3322" y="812"/>
  <g transform="translate(1183 580)"><circle r="22" fill="#fff"/><circle r="19" fill="#0ba29b"/><path d="M-11-3h5v-5h4v-4h4v4h4v5h5l-2 13H-9z" fill="#fff"/></g>
  <use href="#stations" x="2164" y="832"/><use href="#stations" x="4198" y="811"/>
  <use href="#shield" x="2167" y="124"/><use href="#shield" x="2551" y="1172"/><use href="#shield" x="1930" y="698"/>
  <g class="shield-text"><text x="2169" y="132">50</text><text x="2551" y="1181">50</text><text x="1930" y="707">55</text><rect x="2871" y="1060" width="69" height="32" fill="#689f45"/><text x="2904" y="1086">A60</text></g>

  <!-- street names -->
  <g class="street">
    <text class="lane" transform="translate(512 180) rotate(-26)" textLength="166">Caravel Ln</text><text class="lane" transform="translate(27 310) rotate(65)" textLength="155">Wattle Rd</text>
    <text transform="translate(1525 130) rotate(-17.5)" textLength="200">La Trobe St</text><text transform="translate(1990 1145) rotate(-18.5)" textLength="166">Collins St</text>
    <text transform="translate(1290 1029) rotate(78)">Navigation Rd</text><text transform="translate(1084 1140) rotate(73)">Import Ln</text>
    <text transform="translate(2661 303) rotate(-19.5)" textLength="265">Little Bourke St</text><text transform="translate(2724 489) rotate(-19)" textLength="168">Bourke St</text>
    <text transform="translate(3130 522) rotate(-19.5)" textLength="260">Little Collins St</text><text transform="translate(2848 832) rotate(-18.5)" textLength="166">Collins St</text><text transform="translate(3394 820) rotate(-19)" textLength="190">Flinders Ln</text>
    <text transform="translate(3888 453) rotate(-19)" textLength="164">Collins St</text><text transform="translate(4239 38) rotate(68)">Ln</text><text transform="translate(3617 948) rotate(-18.5)" textLength="202">Flinders St</text><text transform="translate(3627 732) rotate(73)" textLength="130">Bond St</text><text transform="translate(4410 917) rotate(72)" textLength="184">St Kilda Rd</text>
  </g>

  <!-- place names -->
  <g class="place">
    <g class="eat"><text x="280" y="258" textLength="347">Cargo Bar &amp; Eatery</text><text x="937" y="1023" textLength="198">Sher Singh</text><text x="2326" y="275" textLength="216">Delhi Rocks</text><text x="3070" y="141" textLength="438">Patricia Coffee Brewers</text><text x="2719" y="567" textLength="342">Saravanaa Bhavan</text><text x="3385" y="348" textLength="282">Dodee Paidang</text><text x="4567" y="210" textLength="234">Garden State</text><text x="4504" y="318" textLength="176">Chin Chin</text></g>
    <g class="shop"><text x="750" y="1134" textLength="223">Woolworths</text><text x="670" y="1176" textLength="304">Victoria Harbour</text><text x="1773" y="456" textLength="407">Spencer Outlet Centre</text><text x="3595" y="177" textLength="313">The Walk Arcade</text></g>
    <g class="stay"><text x="1575" y="903" textLength="317">Travelodge Hotel</text><text x="1490" y="945" textLength="403">Melbourne Docklands</text><text x="2335" y="150" textLength="305">The Ritz-Carlton,</text><text x="2335" y="192" textLength="198">Melbourne</text></g>
    <g class="see"><text x="2893" y="939" textLength="398">Immigration Museum</text><text x="2926" y="981" textLength="367">(Museums Victoria)</text><text x="2815" y="1185" textLength="166">SEA LIFE</text><text x="2590" y="1227" textLength="391">Melbourne Aquarium</text><text x="4552" y="459">The Ian Potter</text><text x="4552" y="501" textLength="254">NGV Australia</text></g>
    <g class="civic"><text x="158" y="1098" textLength="358">Library at The Dock</text><text class="small" x="-10" y="1088">na</text><text x="3945" y="546" textLength="359">St Paul's Cathedral,</text><text x="4105" y="588" textLength="198">Melbourne</text><text x="4284" y="735" textLength="209">Fed Square</text></g>
    <text class="venue" x="1191" y="486" textLength="291">Marvel Stadium</text>
    <g class="station"><text x="1828" y="849" textLength="289">Southern Cross</text><text x="4195" y="892" textLength="273">Flinders Street</text></g>
    <g class="river"><text transform="translate(162 797) rotate(-5)" textLength="216">Yarra River</text><text transform="translate(4490 1002) rotate(-5)" textLength="216">Yarra River</text></g>
  </g>

  <!-- pins -->
  <g color="#ff8020"><use href="#food" x="672" y="238"/><use href="#food" x="1180" y="1003"/><use href="#food" x="2588" y="255"/><use href="#food" x="2673" y="547"/><use href="#food" x="3714" y="327"/><use href="#food" x="4725" y="297"/>
    <g transform="translate(3024 120)"><use href="#pin"/><path d="M-14-14h24v17q0 5-5 5h-14q-5 0-5-5zM-14 11h28v4h-28z" fill="#fff"/><path d="M10-10h4q4 8-4 11" fill="none" stroke="#fff" stroke-width="3"/></g></g>
  <g color="#0a96ff"><use href="#bag" x="2225" y="435"/><use href="#bag" x="3954" y="157"/><g transform="translate(1020 1134)"><use href="#pin"/><path d="M-16-15h6l8 22h14" fill="none" stroke="#fff" stroke-width="4"/><path d="M-9-11h25l-5 14H-4z" fill="#fff"/><circle cx="-2" cy="13" r="3.500" fill="#fff"/><circle cx="10" cy="13" r="3.500" fill="#fff"/></g></g>
  <g color="#ff46c7"><use href="#bed" x="1941" y="903"/><use href="#bed" x="2289" y="150"/><use href="#bed" x="2336" y="1"/></g>
  <g color="#16a375" transform="translate(1526 465)"><use href="#pin"/><path d="M-18-12h8v5l8-4q2-6 8-5l4 4 6 1v8l2 3-4 15h-28l-3-13 5-6-6-2z" fill="#fff"/><path d="M-12 2q14 6 26-2M3-7h5" fill="none" stroke="#16a375" stroke-width="3"/></g>
  <g color="#78909c"><g transform="translate(561 1077)"><use href="#pin"/><path d="M-18-11q9-4 16 0v22q-8-4-16 0zM2-11q9-4 16 0v22q-8-4-16 0z" fill="#fff"/></g>
    <g transform="translate(4350 546)"><use href="#pin"/><path d="M0-18v36M-11-7h22" stroke="#fff" stroke-width="5"/></g>
    <g transform="translate(4542 715)"><use href="#pin"/><path d="M-18-7L0-16 18-7v3h-36zM-17 9h34v4h-34z" fill="#fff"/><path d="M-12-3V9M-4-3V9M4-3V9M12-3V9" stroke="#fff" stroke-width="4"/></g></g>
  <g color="#b66cfb"><g transform="translate(3339 940)"><use href="#pin"/><path d="M-17-5L0-16 17-5v3h-3V9h3v4h-34V9h3V-2h-3z" fill="#fff"/><path d="M-8-2h4v11h-4zM4-2h4v11H4zM-2-1h4v4h-4z" fill="currentColor"/></g>
    <g transform="translate(3027 1186)"><use href="#pin"/><path d="M-17-3Q-10-15 5-11l5-4-2 8Q12 0 11 12l4 5-8-3-5 3 2-6Q2 0-6-1z" fill="#fff"/></g>
    <g transform="translate(4635 552)"><use href="#pin"/><path d="M0-15a15 15 0 0 1 17 17q-1 6-9 3-6 2-2 7 0 5-6 5a16 16 0 1 1 0-32z" fill="#fff"/><circle cx="-7" cy="-3" r="3" fill="currentColor"/><circle cx="0" cy="-8" r="3" fill="currentColor"/><circle cx="8" cy="-5" r="3" fill="currentColor"/><circle cx="-6" cy="5" r="3" fill="currentColor"/></g></g>

  <text class="google" x="2328" y="1158" textLength="141"><tspan fill="#4285f4">G</tspan><tspan fill="#ea4335">o</tspan><tspan fill="#fbbc04">o</tspan><tspan fill="#4285f4">g</tspan><tspan fill="#34a853">l</tspan><tspan fill="#ea4335">e</tspan></text>
</svg>
<a class="map-link" href="#">View larger map</a>
<div class="map-thumb">
  <svg viewBox="0 0 38 38" width="38" height="38"><rect width="38" height="38" fill="#3c3e37"/><path d="M0 4L8 0 14 12 22 34 14 38H0Z" fill="#9c9077"/><path d="M0 0h7L0 6zM4 9l4-2 12 26-4 2zM0 22l10-3 2 8-11 4z" fill="#c5b998"/><path d="M0 16l7-3M0 34l12-5M9 1l4 10M16 3l5 7" stroke="#4b463a" stroke-width="2"/><path d="M14 2l4 3M22 5l5 2M30 3l4 5M18 13l5-3M27 14l7-2M22 20l5 4M32 19l4 4M25 29l5-3M33 31l4-3M23 35l6 1M29 9l2 2M20 25l3 2M33 13l3 3M27 21l3-2M29 33l3 3" stroke="#a7aca4" stroke-width="2"/><path d="M24 0l-3 8 8 8-4 6 7 7 3 9M16 6l4 12 8 4 10-7" fill="none" stroke="#151a17" stroke-width="1.500"/></svg>
</div>
<div class="map-zoom"><span class="plus"></span><span class="rule"></span><span class="minus"></span></div>
<div class="map-credit"><span>Keyboard shortcuts</span><span>Map data ©2024 Google</span><span>Terms</span><span>Report a map error</span></div>
</section>

<footer class="site-footer">
  <div class="columns">
    <div class="column"><h3>ABOUT US</h3><p>We are a premier gym offering state-of-the-art equipment, personal training, and group fitness classes.</p><p>Join us today and take the first step towards a healthier you!</p></div>
    <div class="column"><h3>QUICK LINKS</h3><ul><li><a href="#">Home</a></li><li><a href="#">Classes</a></li><li><a href="#">Contact</a></li></ul></div>
    <div class="column"><h3>CONTACT</h3><p>Email: info@fitnessgym.com</p><p>Phone: +44 20 7946 0958</p><p>Address: 32 High Street, London, UK</p></div>
    <div class="column"><h3>FOLLOW US</h3>
      <div class="social">
        <a href="#"><svg class="icon"><use href="#facebook"/></svg></a>
        <a href="#"><svg class="icon"><use href="#twitter"/></svg></a>
        <a href="#"><svg class="icon icon-narrow"><use href="#instagram"/></svg></a>
        <a href="#"><svg class="icon icon-narrow"><use href="#linkedin"/></svg></a>
      </div>
    </div>
  </div>
  <p class="copyright">© 2024 Fitness Gym. All rights reserved.</p>
</footer>
</body>
</html>
```
FILE: styles.css
```css
* { box-sizing: border-box; margin: 0; padding: 0; }
body { background: #111; color: #fff; font: 16px "Liberation Sans", Arial, sans-serif; line-height: 18px; }
a { color: inherit; text-decoration: none; }
.sprite { display: none; }

.site-header { display: grid; grid-template-columns: 1fr auto 1fr; align-items: center; height: 120px; padding: 10px 20px; background: #040404; }
.logo, .logo svg { display: block; width: 100px; height: 100px; }
.logo-name { font: italic 700 32px "Open Sans", "Liberation Sans", sans-serif; fill: #eee; }
.logo-sub { font: italic 700 14px "Open Sans", "Liberation Sans", sans-serif; fill: #ddd; }
.main-nav { display: flex; gap: 20px; font-size: 14.4px; }
.social { display: flex; justify-content: center; gap: 18.45px; }
.social a { display: block; height: 25.6px; }
.social-header { justify-content: flex-end; padding-top: 8px; }
.icon { display: block; width: 25.6px; height: 25.6px; fill: #fff; }
.icon-narrow { width: 22.4px; }

.contact { width: 800px; margin: 20px auto 80px; padding: 19px 20px 20px; text-align: center; border-radius: 8px; box-shadow: 0 4px 8px rgba(0, 0, 0, .06); }
h1 { font-size: 40px; line-height: 46px; color: #f97316; }
.intro { margin: 20px 0; }
.details { display: flex; flex-direction: column; gap: 10px; }
.form { display: flex; flex-direction: column; gap: 20px; margin-top: 32px; text-align: left; }
.field { display: flex; flex-direction: column; gap: 5px; }
label { font-weight: 700; }
input, textarea { width: 100%; padding: 14px; border: 1px solid #ddd; border-radius: 5px; background: #fff; font: 16px "Liberation Sans", Arial, sans-serif; line-height: 18px; }
input { height: 48px; }
textarea { height: 140px; resize: vertical; }
button { align-self: center; width: 380px; height: 50px; margin-top: 4px; padding-bottom: 1px; border: 2px outset #000; border-radius: 5px; background: #f97316; color: #fff; font: 700 19.2px "Liberation Sans", Arial, sans-serif; }

.map { position: relative; height: 400px; margin-bottom: 4px; overflow: hidden; font-family: Roboto, sans-serif; }
.map-canvas { display: block; width: 1600px; height: 400px; }
.street text, .place text { paint-order: stroke; stroke: #fff; stroke-width: 7px; stroke-linejoin: round; }
.street text { font-size: 39px; font-weight: 500; fill: #455468; }
.street .lane { font-size: 36px; font-weight: 400; fill: #5c666e; }
.place text { font-size: 42px; }
.place .small { font-size: 36px; }
.eat { fill: #d4600c; }
.shop { fill: #1b73e8; }
.stay { fill: #e52bb0; }
.see { fill: #8d49dc; }
.civic { fill: #5b7484; }
.venue { fill: #188764; }
.station { fill: #3c4f63; font-weight: 500; }
.place .river text { fill: #168698; stroke: none; }
.shield-text { font-size: 26px; font-weight: 700; fill: #fff; text-anchor: middle; }
.google { font: 500 46px Lato, sans-serif; paint-order: stroke; stroke: #fff; stroke-width: 6px; }
.map-link { position: absolute; left: 10px; top: 10px; padding: 4px 15px; border-radius: 2px; background: #fff; color: #1a73e8; font-size: 12px; line-height: 18px; box-shadow: 0 1px 4px rgba(0, 0, 0, .25); }
.map-thumb { position: absolute; left: 10px; bottom: 11px; width: 42px; height: 42px; border: 2px solid #fff; border-radius: 2px; box-shadow: 0 1px 4px rgba(0, 0, 0, .4); }
.map-thumb svg { display: block; }
.map-zoom { position: absolute; right: 10px; top: 295px; display: flex; flex-direction: column; align-items: center; width: 40px; height: 81px; background: #fff; box-shadow: 0 1px 4px rgba(0, 0, 0, .3); }
.plus, .minus { width: 18px; height: 18px; margin: 11px 0; background: linear-gradient(#666, #666) center / 18px 4px no-repeat; }
.plus { background: linear-gradient(#666, #666) center / 18px 4px no-repeat, linear-gradient(#666, #666) center / 4px 18px no-repeat; }
.rule { width: 30px; height: 1px; background: #e6e6e6; }
.map-credit { position: absolute; right: 0; bottom: 0; display: flex; gap: 12px; height: 14px; padding: 0 6px 0 5px; background: rgba(245, 245, 245, .75); color: #111; font-size: 10px; line-height: 14px; white-space: nowrap; }

.site-footer { height: 278px; padding: 60px 0 0; background: #222; text-align: center; }
.columns { display: grid; grid-template-columns: repeat(4, 300px); justify-content: center; height: 145px; }
.column { padding: 0 20px; font-size: 14.4px; line-height: 16px; }
h3 { margin-bottom: 16px; font-size: 24px; line-height: 27px; color: #d95b10; }
.column p { margin-bottom: 10px; }
.column ul { list-style: none; font-size: 16px; line-height: 18px; }
.column li { margin-bottom: 10px; }
.copyright { font-size: 12.8px; line-height: 15px; margin-top: 17px; color: #888; }
```
